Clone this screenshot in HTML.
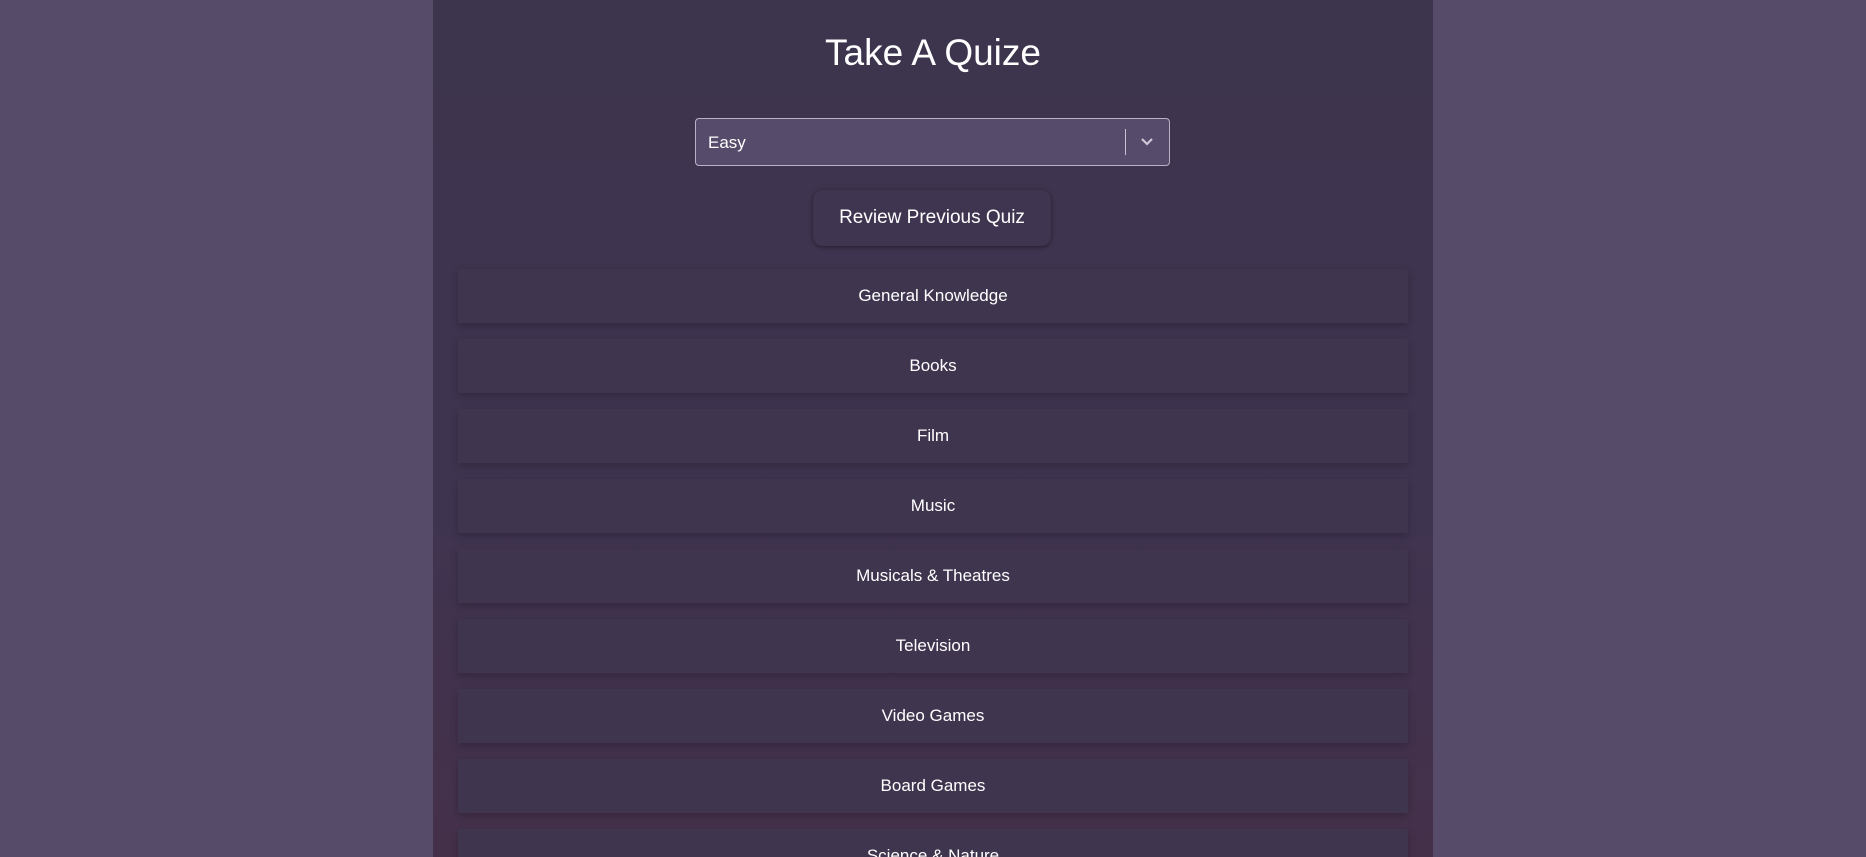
<!DOCTYPE html>
<html><head><meta charset="utf-8"><style>
html,body{margin:0;padding:0;width:1866px;height:857px;overflow:hidden;background:#574b6a;font-family:"Liberation Sans",Arial,sans-serif;color:#fff}
.panel{position:absolute;left:433px;top:0;width:1000px;height:857px;overflow:hidden;background:linear-gradient(180deg,#3d344e 0%,#3f3450 60%,#45304a 100%)}
h1{position:absolute;top:29px;left:0;width:1000px;margin:0;text-align:center;font-weight:normal;font-size:37px;line-height:48px}
.sel{position:absolute;left:262px;top:118px;width:473px;height:46px;border:1px solid #b9b1c6;border-radius:4px;background:#564b6b}
.sel span{position:absolute;left:12px;top:14px;font-size:17px}
.sel .bar{position:absolute;left:429px;top:10px;width:1px;height:26px;background:#c8c2d2}
.sel svg{position:absolute;left:443px;top:16px}
.btn{position:absolute;left:380px;top:190px;width:238px;height:56px;border-radius:10px;background:#3f3550;box-shadow:0 1px 4px rgba(0,0,0,.45);text-align:center;line-height:56px;font-size:19px}
.row{position:absolute;left:25px;width:950px;height:54px;background:#40354f;box-shadow:0 3px 8px rgba(0,0,0,.22);text-align:center;line-height:54px;font-size:17px}
</style></head><body>
<div class="panel">
<h1>Take A Quize</h1>
<div class="sel"><span>Easy</span><div class="bar"></div><svg width="16" height="14" viewBox="0 0 16 14"><path d="M3 4l5 5 5-5" stroke="#cfc8d8" stroke-width="2.2" fill="none"/></svg></div>
<div class="btn">Review Previous Quiz</div>
<div class="row" style="top:269px">General Knowledge</div>
<div class="row" style="top:339px">Books</div>
<div class="row" style="top:409px">Film</div>
<div class="row" style="top:479px">Music</div>
<div class="row" style="top:549px">Musicals &amp; Theatres</div>
<div class="row" style="top:619px">Television</div>
<div class="row" style="top:689px">Video Games</div>
<div class="row" style="top:759px">Board Games</div>
<div class="row" style="top:829px">Science &amp; Nature</div>
</div>
</body></html>
